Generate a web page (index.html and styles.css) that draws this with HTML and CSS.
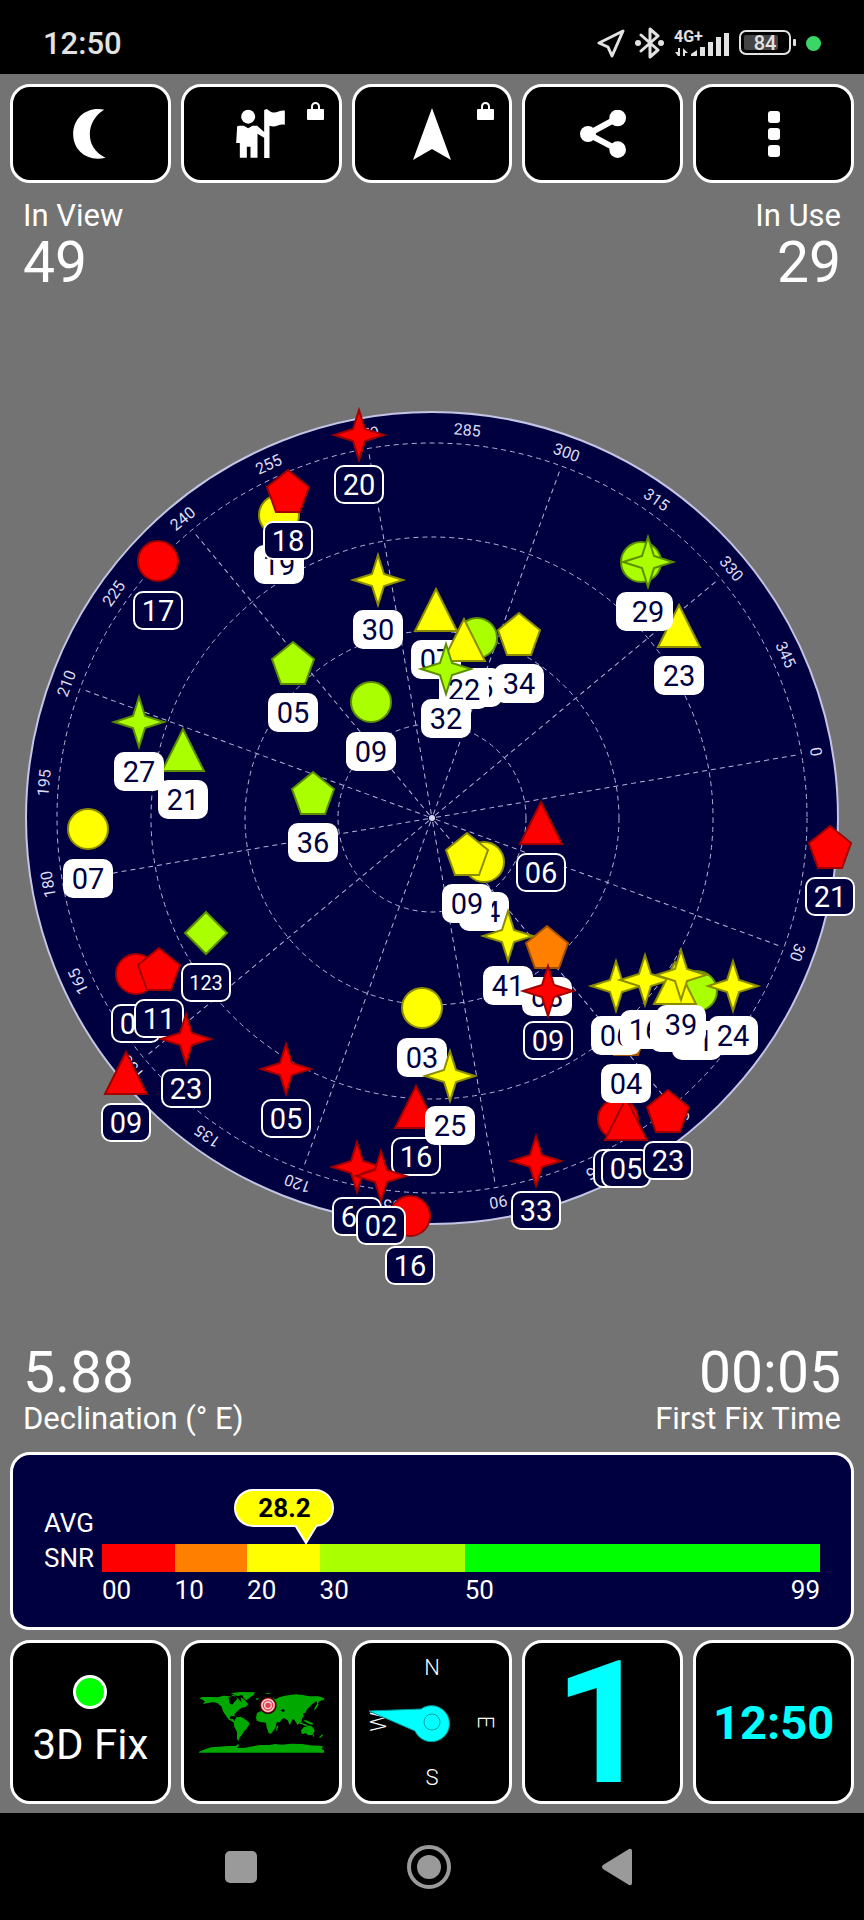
FILE: index.html
```html
<!DOCTYPE html>
<html lang="en">
<head>
	<meta charset="UTF-8">
	<meta name="viewport" content="width=device-width, initial-scale=1">
	<title>GPS Status</title>
	<link rel="stylesheet" href="styles.css">
</head>
<body>
	<div class="status">
		<span class="time">12:50</span>
		<div class="indicators">
			<svg width="28" height="30" viewBox="0 0 28 30">
				<path class="line" d="M26 3L2 15l9 4 4 9z"/>
			</svg>
			<svg width="29" height="32" viewBox="0 0 29 32">
				<path class="line" d="M6 8l17 15-8 7V2l8 7L6 24"/>
				<circle cx="3" cy="16" r="3"/>
				<circle cx="26" cy="16" r="3"/>
			</svg>
			<svg width="55" height="34" viewBox="0 -4 55 34">
				<text class="net" x="0" y="12">4G+</text>
				<path d="M4 18h2v8H4l-3-4h3zM9 26v-8l5 5h-3v3z"/>
				<path d="M17 24l6-4v6h-6zM26 17h5v9h-5zM34 12h5v14h-5zM42 7h5v19h-5zM50 3h5v23h-5z"/>
			</svg>
			<svg width="57" height="26" viewBox="0 0 57 26">
				<rect class="line" x="1" y="1" width="50" height="23" rx="6"/>
				<rect class="charge" x="5" y="5" width="34" height="15" rx="2"/>
				<rect x="54" y="9" width="3" height="7" rx="1"/>
				<text class="level" x="26" y="20">84</text>
			</svg>
			<span class="live"></span>
		</div>
	</div>

	<main>
		<div class="toolbar">
			<button class="tile" aria-label="Night mode">
				<svg width="35" height="50" viewBox="219 326 104 150">
					<path d="M312 328C260 318 219 352 219 402s45 84 97 70c-34-17-47-42-47-71s15-56 43-73z"/>
				</svg>
			</button>
			<button class="tile" aria-label="Waypoint">
				<svg width="50" height="50" viewBox="710 326 149 150">
					<circle cx="746" cy="349" r="21"/>
					<path d="M719 376h14l13 8 13-8h14l21 19v-66l8-3 8 6c18 12 28-4 46-1v42c-18-4-28 11-46 3v97h-16v-61l-20-12v72h-21v-33h-11v33h-21v-44h-11l3-50z"/>
				</svg>
				<svg class="lock" width="17" height="18" viewBox="0 0 17 18">
					<path class="shackle" d="M5 9V4.500a3.500 3.500 0 0 1 7 0V9"/>
					<rect y="7" width="17" height="11" rx="1"/>
				</svg>
			</button>
			<button class="tile" aria-label="Navigate">
				<svg width="38" height="52" viewBox="0 0 38 52">
					<path d="M19 0l19 52-19-11L0 52z"/>
				</svg>
				<svg class="lock" width="17" height="18" viewBox="0 0 17 18">
					<path class="shackle" d="M5 9V4.500a3.500 3.500 0 0 1 7 0V9"/>
					<rect y="7" width="17" height="11" rx="1"/>
				</svg>
			</button>
			<button class="tile" aria-label="Share">
				<svg width="46" height="48" viewBox="432 330 138 144">
					<path class="link" d="M545 354l-89 48 89 47"/>
					<circle cx="456" cy="402" r="24"/>
					<circle cx="545" cy="354" r="25"/>
					<circle cx="545" cy="449" r="25"/>
				</svg>
			</button>
			<button class="tile" aria-label="Menu">
				<svg width="12" height="46" viewBox="0 0 12 46">
					<rect width="12" height="12" rx="3"/>
					<rect y="17" width="12" height="12" rx="3"/>
					<rect y="34" width="12" height="12" rx="3"/>
				</svg>
			</button>
		</div>

		<div class="stats top">
			<div class="stat">
				<span class="name">In View</span>
				<span class="value">49</span>
			</div>
			<div class="stat">
				<span class="name">In Use</span>
				<span class="value">29</span>
			</div>
		</div>

		<div class="sky">
			<svg viewBox="-432 -480 864 960">
				<circle class="disc" r="406"/>
				<g class="grid">
					<circle r="94"/>
					<circle r="187"/>
					<circle r="281"/>
					<circle r="375"/>
				</g>
				<circle class="zenith" r="3"/>
				<g class="azimuths"></g>
				<g class="sats"></g>
			</svg>
		</div>

		<div class="stats">
			<div class="stat">
				<span class="value">5.88</span>
				<span class="name">Declination (° E)</span>
			</div>
			<div class="stat">
				<span class="value">00:05</span>
				<span class="name">First Fix Time</span>
			</div>
		</div>

		<div class="snr">
			<span class="caption avg">AVG</span>
			<span class="caption">SNR</span>
			<div class="bar">
				<span class="red"></span>
				<span class="orange"></span>
				<span class="yellow"></span>
				<span class="lime"></span>
				<span class="green"></span>
				<div class="pin" style="left: 28.48%">
					<b>28.2</b>
					<svg width="24" height="20" viewBox="0 0 24 20">
						<path d="M1 1l11 18L23 1"/>
					</svg>
				</div>
			</div>
			<div class="scale">
				<span>00</span>
				<span>10</span>
				<span>20</span>
				<span>30</span>
				<span class="last">50<i>99</i></span>
			</div>
		</div>

		<div class="tiles">
			<button class="tile fix">
				<span class="led"></span>
				3D Fix
			</button>
			<button class="tile" aria-label="World map">
				<svg class="map" width="125" height="62" viewBox="596 214 375 186">
					<path d="M596 235l12-3 24 0 20 1 18-5 20 2 12-6 18 0-4 8 8 2 10 8 10 12-8 8-12 2-8 6-8 8-6 6 2 6-10-2-6 4 2 6 8 0 6 8 10 4-2 3-14-6-14-8-8-12-8-12-4-14-12-10-14-4-18 4-12 2 6-8z"/>
					<path d="M690 221l30-4 44 1-4 8-12 8-10 8-8-6-4-9-18-1zM768 236h8l-3 4h-6zM796 221h14v2h-14z"/>
					<path d="M708 293l14-2 12 8 13 10-2 8-6 10-8 8-6 10-8 10-2 8-5-4 0-22-8-16-2-12 4-8z"/>
					<path d="M778 259l8-8 8-10 12-8 12 2 8 4 10-6 18-5 20-3 14-1 18 2 22 4 26 0 18 5-2 6-12 3-6 9-4-8-12 8-6 6-10 10-4 10-8 2 2 10-8 8-10 0 4 12-4 6-8-14-6-6-6 12-4 7-6-14-10-6-6 2-8 10-8-2-8-10-2-6-20-2-18 2-8 2 0-8 10-4z"/>
					<path d="M770 280l10-5 20 2 18 4 10 12 9 2-9 16-2 12-8 12-6 7-7-1-6-18-2-14-14-1-14-5-2-10zM829 320l5-3-3 14-4 2z"/>
					<path d="M902 332l8-9 10-3 6-2 6 0 8 8 3 9-7 11-12 1-8-6-12 2zM883 293l10 6 10-6 2 8-4 8 14 4 10 5-10 1-10-5-12-3-8-9zM908 301l10 1 20 9-2 5-16-6zM944 262l8-12 3 5-8 12-7 6zM936 340l6 8-3 4zM956 353l10-9 3 2-10 9z"/>
					<path d="M596 396l20-8 16-5 24-2 26-2 24 0 8-6 2 5-6 6 20 1 20-4 30-5 28 0 16-3 20 2 28-3 34 1 22 4 26 1 14 2-4 8 12 7v4H596z"/>
					<path class="sea" d="M684 234l10-6 14 3 2 8-8 8-6 8-8-4zM700 227l8 5 16 16-4-18zM840 272l10-4 4 6-6 3z"/>
					<circle class="here" cx="803" cy="257" r="24"/>
					<circle class="ring" cx="803" cy="257" r="18"/>
					<circle class="ring" cx="803" cy="257" r="10"/>
				</svg>
			</button>
			<button class="tile" aria-label="Compass">
				<svg class="compass" width="140" height="140" viewBox="-70 -70 140 140">
					<text y="-47">N</text>
					<text y="63">S</text>
					<text y="8" transform="rotate(90) translate(0 -54)">E</text>
					<text y="8" transform="rotate(-90) translate(0 -54)">W</text>
					<path d="M-63-11l52-2A18 18 0 1 1-17 9z"/>
					<circle r="8"/>
				</svg>
			</button>
			<button class="tile count">1</button>
			<button class="tile clock">12:50</button>
		</div>
	</main>

	<nav>
		<button aria-label="Recent apps">
			<svg width="32" height="32" viewBox="0 0 32 32"><rect width="32" height="32" rx="5"/></svg>
		</button>
		<button aria-label="Home">
			<svg width="44" height="44" viewBox="0 0 44 44">
				<circle class="ring" cx="22" cy="22" r="20"/>
				<circle cx="22" cy="22" r="12"/>
			</svg>
		</button>
		<button aria-label="Back">
			<svg width="30" height="38" viewBox="0 0 30 38"><path d="M27 1q3-1 3 2v32q0 3-3 2L1 21q-2-2 0-4z"/></svg>
		</button>
	</nav>

	<script>
		var NS = "http://www.w3.org/2000/svg",
			heading = 279.8,     //azimuth at the top of the plot
			azimuths = document.querySelector(".azimuths"),
			grid = document.querySelector(".grid"),
			satLayer = document.querySelector(".sats");

		//one shape for each constellation
		var shapes = {
			circle: "M-20 0a20 20 0 1 1 40 0a20 20 0 1 1-40 0z",
			star: "M0-25L6-6 25 0 6 6 0 25-6 6-25 0-6-6z",
			triangle: "M0-21L21 21H-21z",
			pentagon: "M0-21L21-4 12 21H-12L-21-4z",
			diamond: "M0-21L21 0 0 21-21 0z"
		};

		//x, y from the zenith, shape, colour, id, 1 = used in fix
		var sats = [
			[-274, -257, "circle", "red", "17", 0],
			[-153, -303, "circle", "yellow", "19", 1],
			[-144, -327, "pentagon", "red", "18", 0],
			[-73, -383, "star", "red", "20", 0],
			[-54, -238, "star", "yellow", "30", 1],
			[4, -208, "triangle", "yellow", "07", 1],
			[45, -180, "circle", "lime", "15", 1],
			[32, -178, "triangle", "yellow", "22", 1],
			[14, -149, "star", "lime", "32", 1],
			[87, -184, "pentagon", "yellow", "34", 1],
			[-139, -155, "pentagon", "lime", "05", 1],
			[-61, -116, "circle", "lime", "09", 1],
			[-249, -68, "triangle", "lime", "21", 1],
			[-293, -96, "star", "lime", "27", 1],
			[-119, -25, "pentagon", "lime", "36", 1],
			[-344, 11, "circle", "yellow", "07", 1],
			[-226, 115, "diamond", "lime", "123", 0],
			[-296, 156, "circle", "red", "03", 0],
			[-273, 151, "pentagon", "red", "11", 0],
			[-246, 221, "star", "red", "23", 0],
			[-306, 255, "triangle", "red", "09", 0],
			[-146, 251, "star", "red", "05", 0],
			[247, -192, "triangle", "yellow", "23", 1],
			[209, -256, "circle", "lime", "29", 1],
			[216, -256, "star", "lime", "29", 1],
			[398, 29, "pentagon", "red", "21", 0],
			[109, 5, "triangle", "red", "06", 0],
			[52, 44, "circle", "yellow", "14", 1],
			[35, 36, "pentagon", "yellow", "09", 1],
			[115, 129, "pentagon", "orange", "08", 1],
			[76, 118, "star", "yellow", "41", 1],
			[116, 173, "star", "red", "09", 0],
			[-10, 190, "circle", "yellow", "03", 1],
			[-22, 398, "circle", "red", "16", 0],
			[-16, 289, "triangle", "red", "16", 0],
			[18, 258, "star", "yellow", "25", 1],
			[-75, 349, "star", "red", "66", 0],
			[-51, 358, "star", "red", "02", 0],
			[104, 343, "star", "red", "33", 0],
			[186, 301, "circle", "red", "04", 0],
			[194, 301, "triangle", "red", "05", 0],
			[236, 293, "pentagon", "red", "23", 0],
			[194, 216, "pentagon", "orange", "04", 1],
			[184, 168, "star", "yellow", "06", 1],
			[213, 162, "star", "yellow", "16", 1],
			[265, 173, "circle", "lime", "31", 1],
			[243, 165, "triangle", "yellow", "04", 1],
			[249, 157, "star", "yellow", "39", 1],
			[301, 168, "star", "yellow", "24", 1]
		];

		function add(parent, tag, attrs, text){
			var el = document.createElementNS(NS, tag);
			for(var key in attrs){
				el.setAttribute(key, attrs[key]);
			}
			if(text){
				el.textContent = text;
			}
			parent.appendChild(el);
			return el;
		}

		//azimuth labels every 15 degrees, spokes every 30
		for(var a = 0; a < 360; a += 15){
			var turn = a - heading;
			if(a % 30 == 0){
				add(grid, "path", {d: "M0-4V-371", transform: "rotate(" + turn + ")"});
			}
			add(azimuths, "text", {y: -384, transform: "rotate(" + turn + ")"}, String(a));
		}

		//satellites, later ones cover earlier ones
		sats.forEach(function(s){
			var g = add(satLayer, "g", {
				"class": s[5] ? "sat used" : "sat",
				transform: "translate(" + s[0] + " " + s[1] + ")"
			});
			var small = s[4].length > 2;
			add(g, "path", {"class": s[3], d: shapes[s[2]]});
			add(g, "rect", {x: -24, y: 31, width: 48, height: 37, rx: 9});
			add(g, "text", {"class": small ? "small" : "id", y: small ? 57 : 60}, s[4]);
		});
	</script>
</body>
</html>
```

FILE: styles.css
```css
* {
	box-sizing: border-box;
	margin: 0;
	padding: 0;
}
body {
	display: flex;
	flex-direction: column;
	min-height: 100vh;
	background: #000;
	color: #fff;
	font-family: Roboto, "Liberation Sans", sans-serif;
}
button {
	border: none;
	background: none;
	color: inherit;
	font-family: inherit;
}
svg {
	display: block;
	fill: currentColor;
}

/* status bar */
.status {
	display: flex;
	justify-content: space-between;
	align-items: center;
	height: 74px;
	padding: 12px 43px 0;
	color: #e2e2e2;
}
.status .time {
	font-size: 31px;
	font-weight: 500;
}
.indicators {
	display: flex;
	align-items: center;
	gap: 10px;
}
.indicators .line {
	fill: none;
	stroke: currentColor;
	stroke-width: 3;
	stroke-linejoin: round;
	stroke-linecap: round;
}
.indicators rect.line {
	stroke-width: 2;
}
.net {
	font-size: 16px;
	font-weight: 700;
}
.charge {
	fill: #444;
}
.level {
	font-size: 20px;
	font-weight: 500;
	text-anchor: middle;
}
.live {
	width: 15px;
	height: 15px;
	border-radius: 50%;
	background: #3ad668;
}

/* app */
main {
	flex: 1;
	display: flex;
	flex-direction: column;
	padding: 10px 0 9px;
	background: #737373;
}
.toolbar,
.tiles {
	display: grid;
	grid-template-columns: repeat(5, 1fr);
	gap: 10px;
	padding: 0 10px;
}
.tile {
	position: relative;
	display: flex;
	flex-direction: column;
	align-items: center;
	justify-content: center;
	height: 99px;
	border: 3px solid #fff;
	border-radius: 20px;
	background: #000;
}
.tiles .tile {
	height: 164px;
}
.lock {
	position: absolute;
	top: 15px;
	right: 15px;
}
.shackle {
	fill: none;
	stroke: #fff;
	stroke-width: 2;
}
.link {
	fill: none;
	stroke: #fff;
	stroke-width: 18;
}

.stats {
	display: flex;
	justify-content: space-between;
	padding: 0 23px 15px;
}
.stats.top {
	padding: 15px 23px 0;
}
.stat {
	display: flex;
	flex-direction: column;
}
.stat:last-child {
	text-align: right;
}
.name {
	font-size: 31px;
	line-height: 36px;
}
.value {
	font-size: 57px;
	line-height: 57px;
}

/* sky plot */
.sky {
	flex: 1;
	display: flex;
	align-items: center;
}
.sky svg {
	width: 100%;
}
.disc {
	fill: #000040;
	stroke: #c4c4e4;
	stroke-width: 2;
}
.grid {
	fill: none;
	stroke: #b4b4d8;
	stroke-width: 1;
	stroke-dasharray: 5 4;
}
.zenith {
	fill: #d8d8f0;
}
.azimuths {
	fill: #dcdcf0;
	font-size: 16px;
	text-anchor: middle;
}
.sat path {
	stroke-width: 2;
}
.sat path.red {
	fill: #f00;
	stroke: #a00000;
}
.sat path.orange {
	fill: #ff8000;
	stroke: #a05000;
}
.sat path.yellow {
	fill: #ff0;
	stroke: #8c8c00;
}
.sat path.lime {
	fill: #af0;
	stroke: #5c8c00;
}
.sat rect {
	fill: #000040;
	stroke: #fff;
	stroke-width: 2;
}
.sat.used rect {
	fill: #fff;
}
.sat text {
	fill: #fff;
	text-anchor: middle;
}
.sat.used text {
	fill: #000040;
}
.sat .id {
	font-size: 29px;
}
.sat .small {
	font-size: 20px;
}

/* signal strength */
.snr {
	display: grid;
	grid-template-columns: 58px 1fr;
	grid-template-rows: 34px 36px 28px;
	align-items: center;
	margin: 0 10px 10px;
	padding: 51px 31px 23px;
	border: 3px solid #fff;
	border-radius: 20px;
	background: #000040;
	font-size: 26px;
}
.avg {
	grid-column: 1 / 3;
}
.bar {
	position: relative;
	display: flex;
	height: 28px;
}
.bar span,
.scale span {
	flex: 10 1 0;
}
.bar .lime,
.scale span:nth-child(4) {
	flex-grow: 20;
}
.bar .green,
.scale .last {
	flex-grow: 49;
}
.bar .red {
	background: #f00;
}
.bar .orange {
	background: #ff8000;
}
.bar .yellow {
	background: #ff0;
}
.bar .lime {
	background: #af0;
}
.bar .green {
	background: #0f0;
}
.pin {
	position: absolute;
	bottom: 100%;
	display: flex;
	flex-direction: column;
	align-items: flex-end;
	width: 100px;
	margin-left: -72px;
}
.pin b {
	width: 100%;
	border: 2px solid #fff;
	border-radius: 19px;
	background: #ff0;
	color: #000;
	line-height: 34px;
	text-align: center;
}
.pin svg {
	margin: -3px 16px 0 0;
	fill: #ff0;
	stroke: #fff;
	stroke-width: 2;
}
.scale {
	grid-column: 2;
	display: flex;
	line-height: 28px;
}
.scale .last {
	display: flex;
	justify-content: space-between;
}
.scale i {
	font-style: normal;
}

/* bottom tiles */
.fix {
	gap: 12px;
	font-size: 42px;
	line-height: 48px;
}
.led {
	width: 34px;
	height: 34px;
	border: 3px solid #fff;
	border-radius: 50%;
	background: #0f0;
}
.map {
	fill: #00a800;
}
.map .sea {
	fill: #000;
}
.map .here {
	fill: #e04050;
	stroke: #300;
	stroke-width: 4;
}
.map .ring {
	fill: none;
	stroke: #ffd0d0;
	stroke-width: 4;
}
.compass text {
	font-size: 22px;
	font-weight: 300;
	text-anchor: middle;
}
.compass path,
.compass circle {
	fill: #0ff;
	stroke: #009c9c;
	stroke-width: 1;
}
.count,
.clock {
	color: #0ff;
	font-weight: 700;
}
.count {
	padding-top: 4px;
	font-size: 171px;
	line-height: 122px;
}
.clock {
	font-size: 47px;
}

/* android navigation */
nav {
	display: flex;
	justify-content: center;
	height: 107px;
	padding-right: 6px;
	color: #9a9a9a;
}
nav button {
	display: flex;
	align-items: center;
	justify-content: center;
	width: 188px;
}
nav .ring {
	fill: none;
	stroke: currentColor;
	stroke-width: 4;
}
```
